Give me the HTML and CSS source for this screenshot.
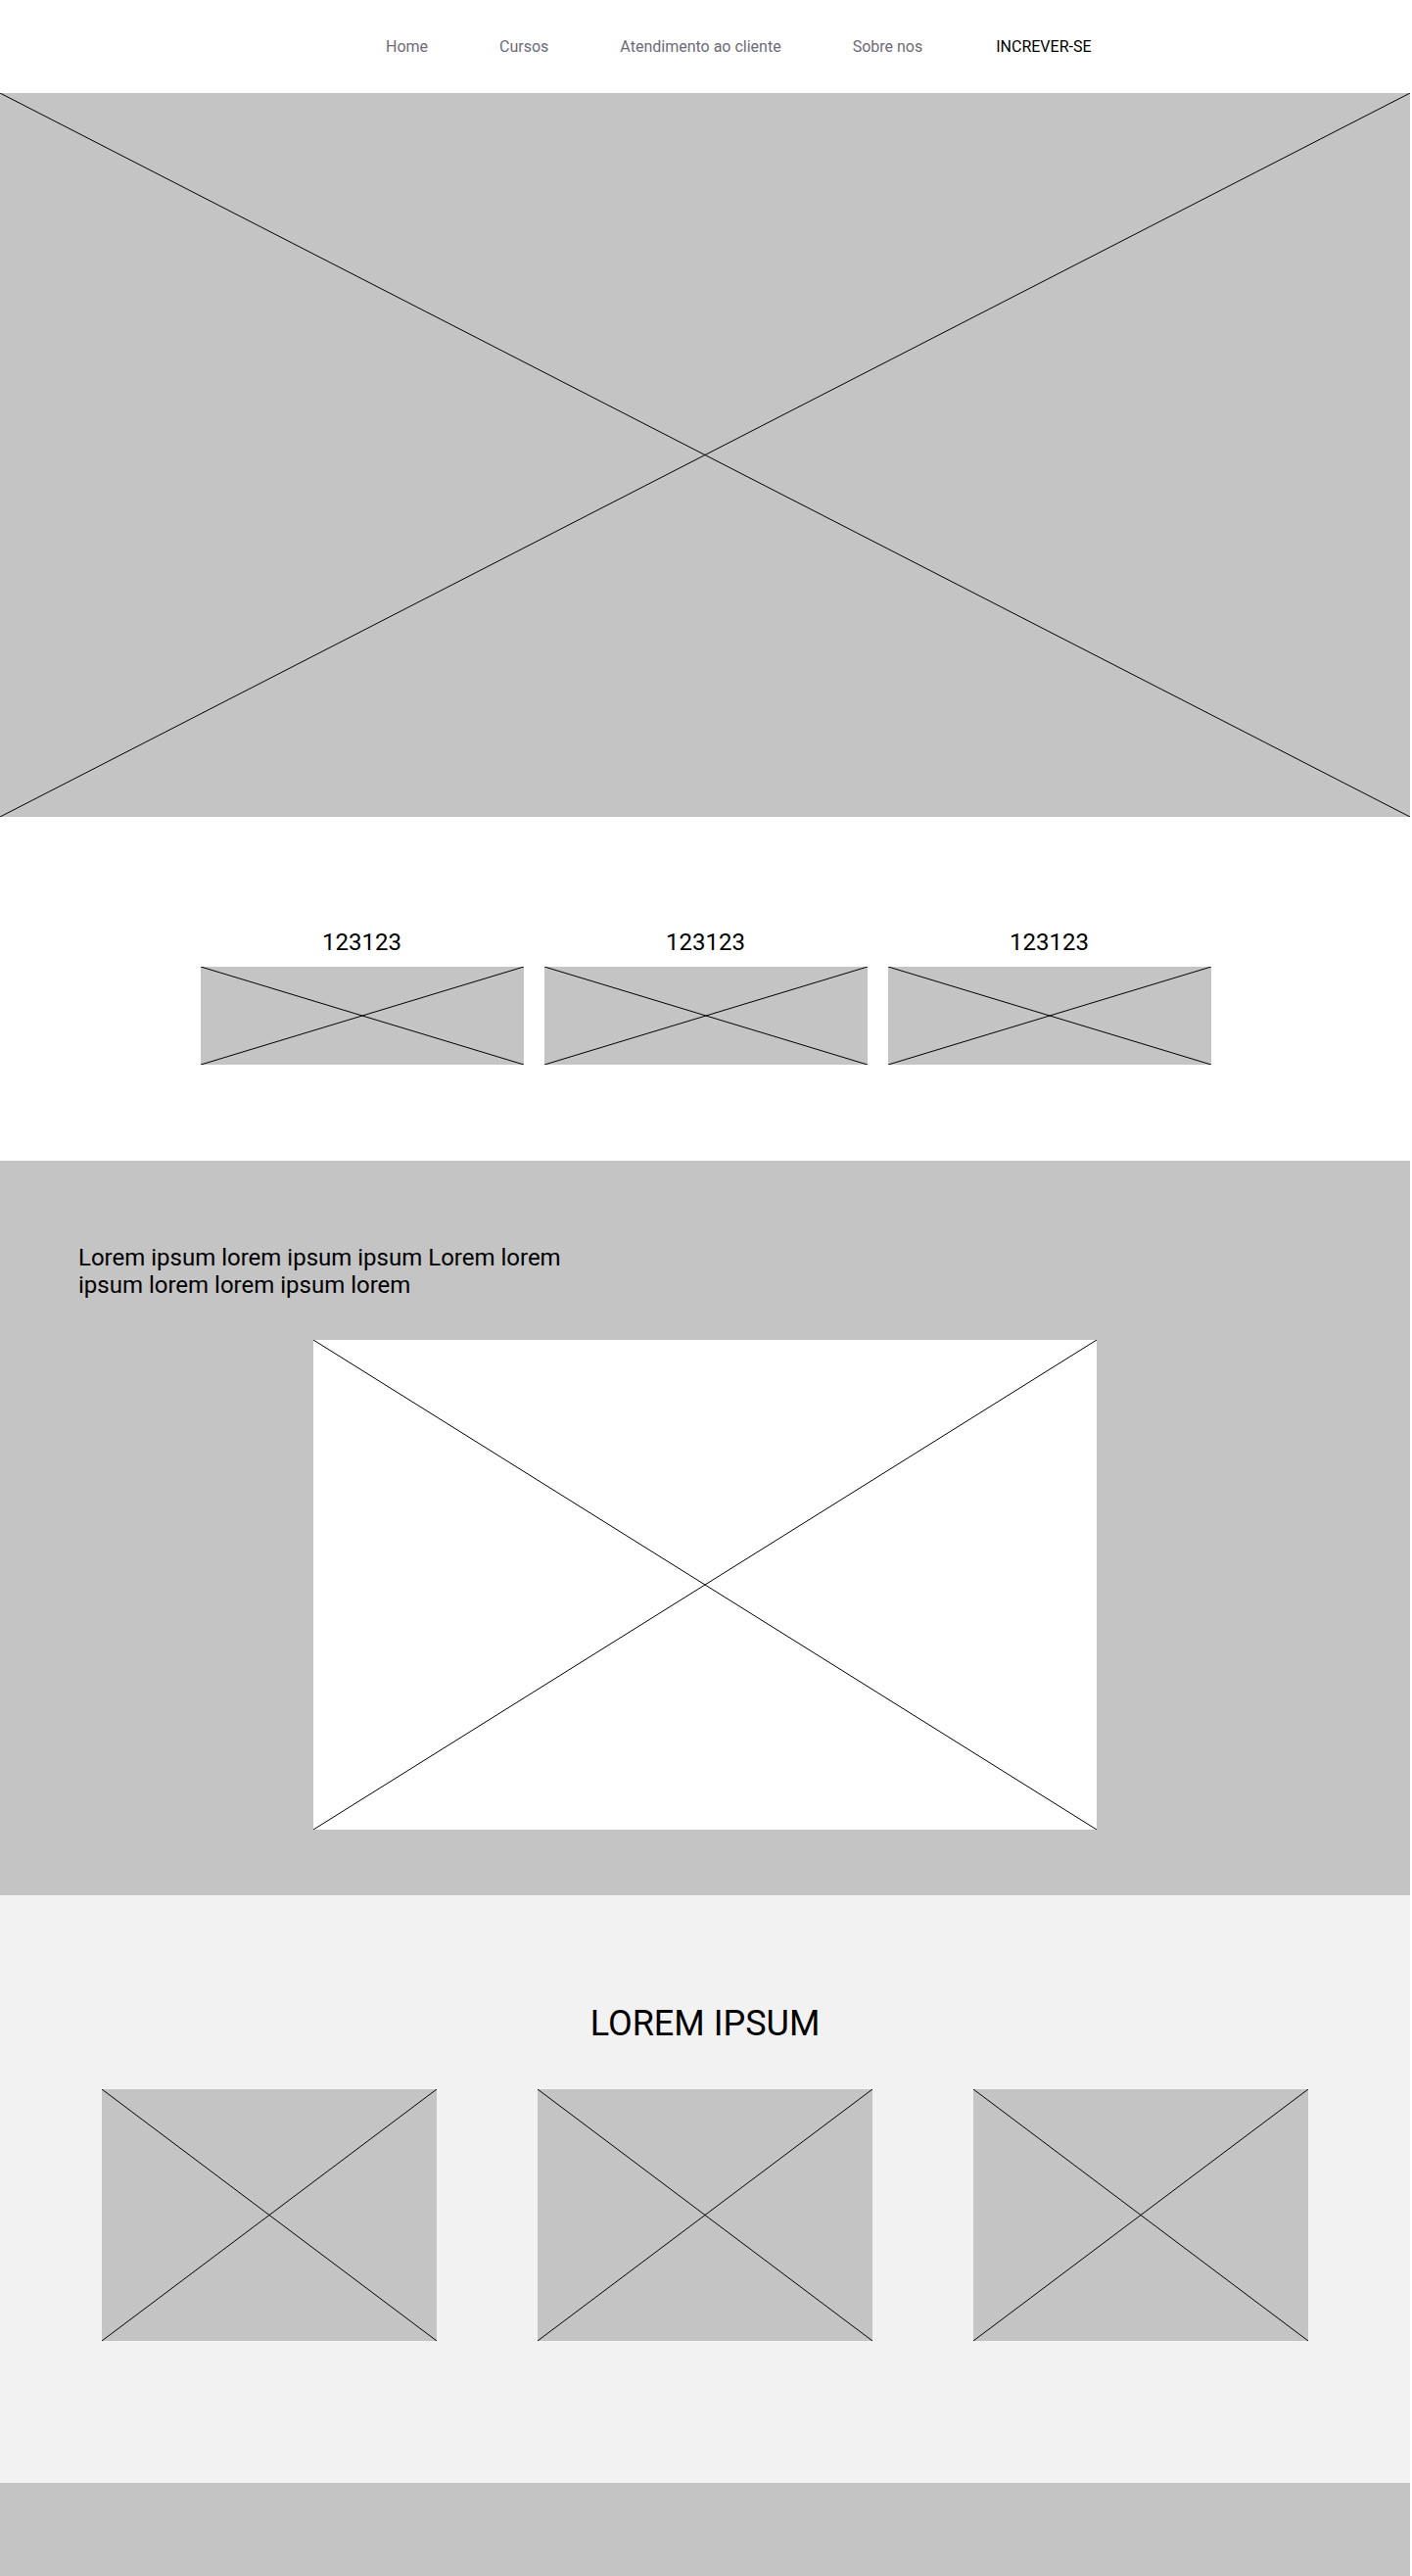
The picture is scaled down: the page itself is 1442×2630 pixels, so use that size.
FILE: index.html
```html
<!DOCTYPE html>
<html lang="pt">
<head>
<meta charset="utf-8">
<title>Wireframe</title>
<link rel="stylesheet" href="styles.css">
</head>
<body>
<div class="page">
  <nav class="nav">
    <a class="nav-link">Home</a>
    <a class="nav-link">Cursos</a>
    <a class="nav-link">Atendimento ao cliente</a>
    <a class="nav-link">Sobre nos</a>
    <a class="nav-link nav-cta">INCREVER-SE</a>
  </nav>

  <section class="hero ph">
    <svg class="x" viewBox="0 0 100 100" preserveAspectRatio="none"><line x1="0" y1="0" x2="100" y2="100"/><line x1="100" y1="0" x2="0" y2="100"/></svg>
  </section>

  <section class="stats">
    <div class="stat-grid">
      <div class="stat">
        <div class="stat-label">123123</div>
        <div class="stat-img ph"><svg class="x" viewBox="0 0 100 100" preserveAspectRatio="none"><line x1="0" y1="0" x2="100" y2="100"/><line x1="100" y1="0" x2="0" y2="100"/></svg></div>
      </div>
      <div class="stat">
        <div class="stat-label">123123</div>
        <div class="stat-img ph"><svg class="x" viewBox="0 0 100 100" preserveAspectRatio="none"><line x1="0" y1="0" x2="100" y2="100"/><line x1="100" y1="0" x2="0" y2="100"/></svg></div>
      </div>
      <div class="stat">
        <div class="stat-label">123123</div>
        <div class="stat-img ph"><svg class="x" viewBox="0 0 100 100" preserveAspectRatio="none"><line x1="0" y1="0" x2="100" y2="100"/><line x1="100" y1="0" x2="0" y2="100"/></svg></div>
      </div>
    </div>
  </section>

  <section class="feature">
    <p class="feature-text">Lorem ipsum lorem ipsum ipsum Lorem lorem ipsum lorem lorem ipsum lorem</p>
    <div class="feature-img">
      <svg class="x" viewBox="0 0 100 100" preserveAspectRatio="none"><line x1="0" y1="0" x2="100" y2="100"/><line x1="100" y1="0" x2="0" y2="100"/></svg>
    </div>
  </section>

  <section class="gallery">
    <h2 class="gallery-title">LOREM IPSUM</h2>
    <div class="gallery-grid">
      <div class="gallery-item ph"><svg class="x" viewBox="0 0 100 100" preserveAspectRatio="none"><line x1="0" y1="0" x2="100" y2="100"/><line x1="100" y1="0" x2="0" y2="100"/></svg></div>
      <div class="gallery-item ph"><svg class="x" viewBox="0 0 100 100" preserveAspectRatio="none"><line x1="0" y1="0" x2="100" y2="100"/><line x1="100" y1="0" x2="0" y2="100"/></svg></div>
      <div class="gallery-item ph"><svg class="x" viewBox="0 0 100 100" preserveAspectRatio="none"><line x1="0" y1="0" x2="100" y2="100"/><line x1="100" y1="0" x2="0" y2="100"/></svg></div>
    </div>
  </section>

  <footer class="footer"></footer>
</div>
</body>
</html>
```

FILE: styles.css
```css
* { box-sizing: border-box; }

html, body {
  margin: 0;
  padding: 0;
  background: #ffffff;
}

body {
  font-family: Roboto, "Liberation Sans", Arial, sans-serif;
  color: #000000;
}

.page {
  width: 1440px;
}

.nav {
  height: 95px;
  display: flex;
  align-items: center;
  padding-left: 394px;
  gap: 73px;
  background: #ffffff;
}

.nav-link {
  font-size: 16px;
  line-height: 19px;
  color: #6d6b78;
  text-decoration: none;
}

.nav-cta {
  color: #000000;
  margin-left: 2px;
}

.ph {
  background: #c4c4c4;
  position: relative;
}

.x {
  position: absolute;
  inset: 0;
  width: 100%;
  height: 100%;
  display: block;
}

.x line {
  stroke: #000000;
  stroke-width: 1;
  vector-effect: non-scaling-stroke;
}

.hero {
  height: 739px;
}

.stats {
  height: 351px;
  padding-top: 114px;
}

.stat-grid {
  display: grid;
  grid-template-columns: repeat(3, 330px);
  gap: 21px;
  justify-content: center;
  padding-left: 1px;
}

.stat {
  display: flex;
  flex-direction: column;
  align-items: center;
  gap: 11px;
}

.stat-label {
  font-size: 24px;
  line-height: 28px;
  color: #000000;
}

.stat-img {
  width: 330px;
  height: 100px;
}

.feature {
  background: #c4c4c4;
  height: 750px;
  padding-top: 85px;
}

.feature-text {
  margin: 0 0 42px 80px;
  width: 520px;
  font-size: 24px;
  line-height: 28px;
}

.feature-img {
  position: relative;
  width: 800px;
  height: 500px;
  margin: 0 auto;
  background: #ffffff;
}

.gallery {
  background: #f2f2f2;
  height: 600px;
  padding-top: 110px;
}

.gallery-title {
  margin: 0 0 46px;
  text-align: center;
  font-size: 36px;
  line-height: 42px;
  font-weight: 400;
}

.gallery-grid {
  display: grid;
  grid-template-columns: repeat(3, 342px);
  gap: 103px;
  justify-content: center;
}

.gallery-item {
  height: 257px;
}

.footer {
  background: #c4c4c4;
  height: 95px;
}
```
